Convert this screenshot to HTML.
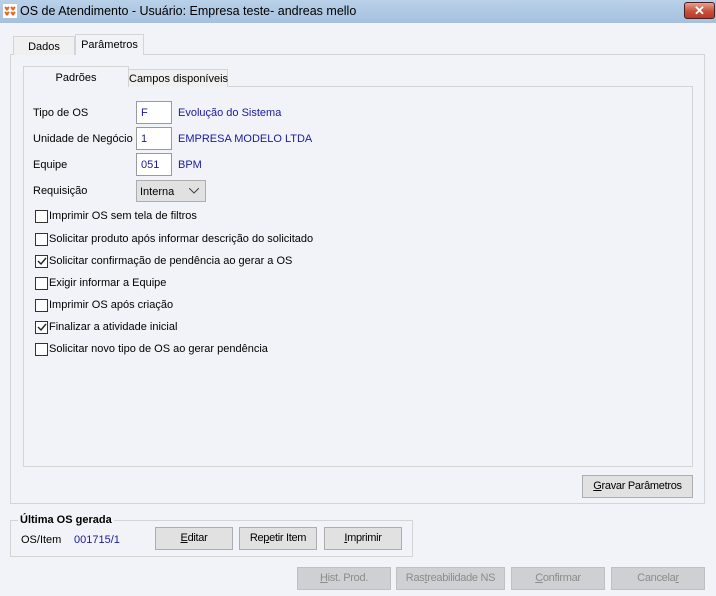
<!DOCTYPE html>
<html><head><meta charset="utf-8"><style>
*{box-sizing:border-box;margin:0;padding:0}
body{width:716px;height:596px;background:#f2f3f8;font-family:"Liberation Sans",sans-serif;font-size:11px;color:#000;position:relative;overflow:hidden;white-space:nowrap}
.a{position:absolute}
.title{left:0;top:0;width:716px;height:23px;background:linear-gradient(#b9d0e8,#a5c1df)}
.title span{position:absolute;left:20px;top:4px;font-size:12.5px;color:#000}
.close{left:684px;top:2px;width:31px;height:17px;border:1px solid #4a2020;border-radius:3px;background:linear-gradient(#e8a090,#c8503c 55%,#b83a28);color:#fff;font-weight:bold;text-align:center;font-size:13px;line-height:15px}
.box{border:1px solid #d4d4d4;background:#f2f3f8}
.tab{border:1px solid #d4d4d4;border-bottom:none;text-align:center}
.lbl{left:33px}
.inp{left:136px;width:36px;height:23px;border:1px solid #9a9a9a;background:#fff;color:#1a1aa0;padding:5px 0 0 4px}
.blue{color:#1a1aa0}
.cb{left:35px;width:13px;height:13px;border:1px solid #333;background:#fff}
.ct{left:49px}
.btn{border:1px solid #adadad;background:#e1e1e1;text-align:center;line-height:21px;font-size:11px;letter-spacing:-0.3px}
.dis{color:#8c8c8c;background:#cfd0d4;border-color:#c0c0c0}
</style></head><body>
<div class="a title"><svg class="a" style="left:3px;top:4px" width="14" height="14"><rect width="14" height="14" fill="#fff"/><path d="M2 3l3 3M6 3l-3 3M8 3l3 3M12 3l-3 3M2 8l3 3M6 8l-3 3M8 8l3 3M12 8l-3 3" stroke="#e06a20" stroke-width="2"/></svg><span>OS de Atendimento - Usuário: Empresa teste- andreas mello</span></div>
<div class="a close">✕</div>

<div class="a box" style="left:10px;top:54px;width:695px;height:450px"></div>
<div class="a tab" style="left:13px;top:36px;width:62px;height:19px;background:#f0f0f0;padding-top:4px">Dados</div>
<div class="a tab" style="left:75px;top:34px;width:69px;height:21px;background:#f2f3f8;padding-top:4px">Parâmetros</div>

<div class="a box" style="left:23px;top:86px;width:670px;height:381px"></div>
<div class="a tab" style="left:23px;top:66px;width:106px;height:21px;background:#f2f3f8;padding-top:5px">Padrões</div>
<div class="a tab" style="left:128px;top:69px;width:100px;height:18px;background:#f0f0f0;padding-top:3px">Campos disponíveis</div>

<div class="a lbl" style="top:107px">Tipo de OS</div>
<div class="a inp" style="top:101px">F</div>
<div class="a blue" style="left:178px;top:107px">Evolução do Sistema</div>
<div class="a lbl" style="top:133px">Unidade de Negócio</div>
<div class="a inp" style="top:127px">1</div>
<div class="a blue" style="left:178px;top:133px">EMPRESA MODELO LTDA</div>
<div class="a lbl" style="top:159px">Equipe</div>
<div class="a inp" style="top:153px">051</div>
<div class="a blue" style="left:178px;top:159px">BPM</div>
<div class="a lbl" style="top:185px">Requisição</div>
<div class="a" style="left:136px;top:180px;width:70px;height:22px;border:1px solid #adadad;background:#e1e1e1;padding:5px 0 0 3px">Interna<svg class="a" style="left:52px;top:7px" width="10" height="6"><path d="M0 0l5 5 5-5" fill="none" stroke="#444"/></svg></div>

<div class="a cb" style="top:210px"></div><div class="a ct" style="top:210px">Imprimir OS sem tela de filtros</div>
<div class="a cb" style="top:233px"></div><div class="a ct" style="top:233px">Solicitar produto após informar descrição do solicitado</div>
<div class="a cb" style="top:255px"><svg width="11" height="11"><path d="M2 5l3 3 5-6" fill="none" stroke="#222" stroke-width="1.4"/></svg></div><div class="a ct" style="top:255px">Solicitar confirmação de pendência ao gerar a OS</div>
<div class="a cb" style="top:277px"></div><div class="a ct" style="top:277px">Exigir informar a Equipe</div>
<div class="a cb" style="top:299px"></div><div class="a ct" style="top:299px">Imprimir OS após criação</div>
<div class="a cb" style="top:321px"><svg width="11" height="11"><path d="M2 5l3 3 5-6" fill="none" stroke="#222" stroke-width="1.4"/></svg></div><div class="a ct" style="top:321px">Finalizar a atividade inicial</div>
<div class="a cb" style="top:343px"></div><div class="a ct" style="top:343px">Solicitar novo tipo de OS ao gerar pendência</div>

<div class="a btn" style="left:582px;top:475px;width:111px;height:23px"><u>G</u>ravar Parâmetros</div>

<div class="a" style="left:10px;top:520px;width:403px;height:37px;border:1px solid #d4d4d4"></div>
<div class="a" style="left:18px;top:514px;background:#f2f3f8;font-weight:bold;padding:0 2px">Última OS gerada</div>
<div class="a" style="left:21px;top:534px">OS/Item</div>
<div class="a blue" style="left:74px;top:534px">001715/1</div>
<div class="a btn" style="left:155px;top:527px;width:78px;height:23px"><u>E</u>ditar</div>
<div class="a btn" style="left:239px;top:527px;width:78px;height:23px">Re<u>p</u>etir Item</div>
<div class="a btn" style="left:324px;top:527px;width:78px;height:23px"><u>I</u>mprimir</div>

<div class="a btn dis" style="left:297px;top:567px;width:94px;height:23px"><u>H</u>ist. Prod.</div>
<div class="a btn dis" style="left:396px;top:567px;width:109px;height:23px">Ras<u>t</u>reabilidade NS</div>
<div class="a btn dis" style="left:511px;top:567px;width:94px;height:23px"><u>C</u>onfirmar</div>
<div class="a btn dis" style="left:611px;top:567px;width:94px;height:23px">Cancela<u>r</u></div>
</body></html>
